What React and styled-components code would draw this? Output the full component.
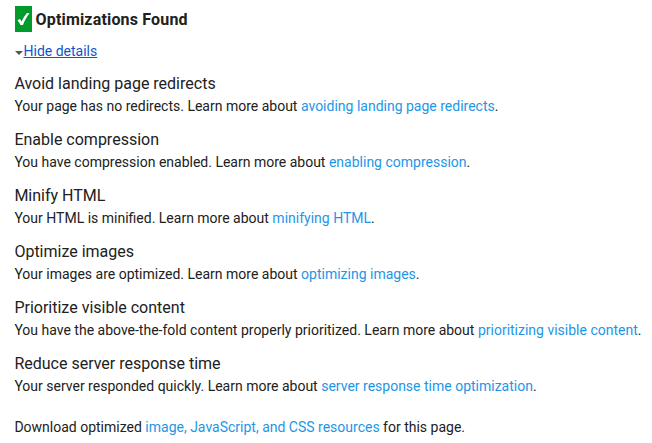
import React from 'react';
import styled, { createGlobalStyle } from 'styled-components';

const GlobalStyle = createGlobalStyle`
  * { box-sizing: border-box; }
  body { margin: 0; background: #fff; color: #212121; font: 14px/20px Roboto, sans-serif; }
`;

const Page = styled.main`
  padding: 6px 0 0 14.4px;
  width: 652px;
  height: 443px;
  overflow: hidden;
  white-space: nowrap;
`;

const Header = styled.h1`
  display: flex;
  align-items: center;
  gap: 3.5px;
  margin: 0;
  padding-left: 0.6px;
  height: 26px;
  font-size: 16px;
  font-weight: 700;
`;

const HeaderText = styled.span`
  padding-top: 2px;
  letter-spacing: 0.18px;
`;

const Check = styled.span`
  display: flex;
  align-items: center;
  justify-content: center;
  width: 17px;
  height: 26px;
  background: #009a2d;
`;

const Toggle = styled.button`
  display: flex;
  align-items: center;
  margin: 9px 0 12px;
  padding: 0;
  border: 0;
  background: none;
  height: 20px;
  color: #1155cc;
  font: inherit;
  text-decoration: underline;
`;

const Caret = styled.svg`
  display: block;
  margin: 4px 0.5px 0 0.6px;
`;

const Rule = styled.section`
  height: 56px;
`;

const RuleTitle = styled.h2`
  margin: 0;
  font-size: 16px;
  font-weight: 400;
  line-height: 22px;
`;

const Text = styled.p`
  margin: 0;
  line-height: 22px;
`;

const Link = styled.a`
  color: #1e96e6;
  text-decoration: none;
`;

const DownloadNote = styled(Text)`
  padding-top: 7px;
`;

const rules = [
  ['Avoid landing page redirects', 'Your page has no redirects.', 'avoiding landing page redirects'],
  ['Enable compression', 'You have compression enabled.', 'enabling compression'],
  ['Minify HTML', 'Your HTML is minified.', 'minifying HTML'],
  ['Optimize images', 'Your images are optimized.', 'optimizing images'],
  ['Prioritize visible content', 'You have the above-the-fold content properly prioritized.', 'prioritizing visible content'],
  ['Reduce server response time', 'Your server responded quickly.', 'server response time optimization'],
];

export default function App() {
  return (
    <Page>
      <GlobalStyle />
      <Header>
        <Check>
          <svg width="17" height="26" viewBox="0 0 17 26">
            <path d="M2.500 14.200 5 12.900 6.600 15.500C8 12.400 9.800 9.400 12 7L14.600 7C11.800 10.500 9.600 14.500 8 19L5.500 19C4.700 17.100 3.700 15.600 2.500 14.200Z" fill="#fff" />
          </svg>
        </Check>
        <HeaderText>Optimizations Found</HeaderText>
      </Header>
      <Toggle>
        <Caret width="8" height="4" viewBox="0 0 8 4"><path d="M0 0h8L4 4Z" fill="#555" /></Caret>
        Hide details
      </Toggle>
      {rules.map(([title, text, link]) => (
        <Rule key={title}>
          <RuleTitle>{title}</RuleTitle>
          <Text>{text} Learn more about <Link>{link}</Link>.</Text>
        </Rule>
      ))}
      <DownloadNote>
        Download optimized <Link>image, JavaScript, and CSS resources</Link> for this page.
      </DownloadNote>
    </Page>
  );
}
